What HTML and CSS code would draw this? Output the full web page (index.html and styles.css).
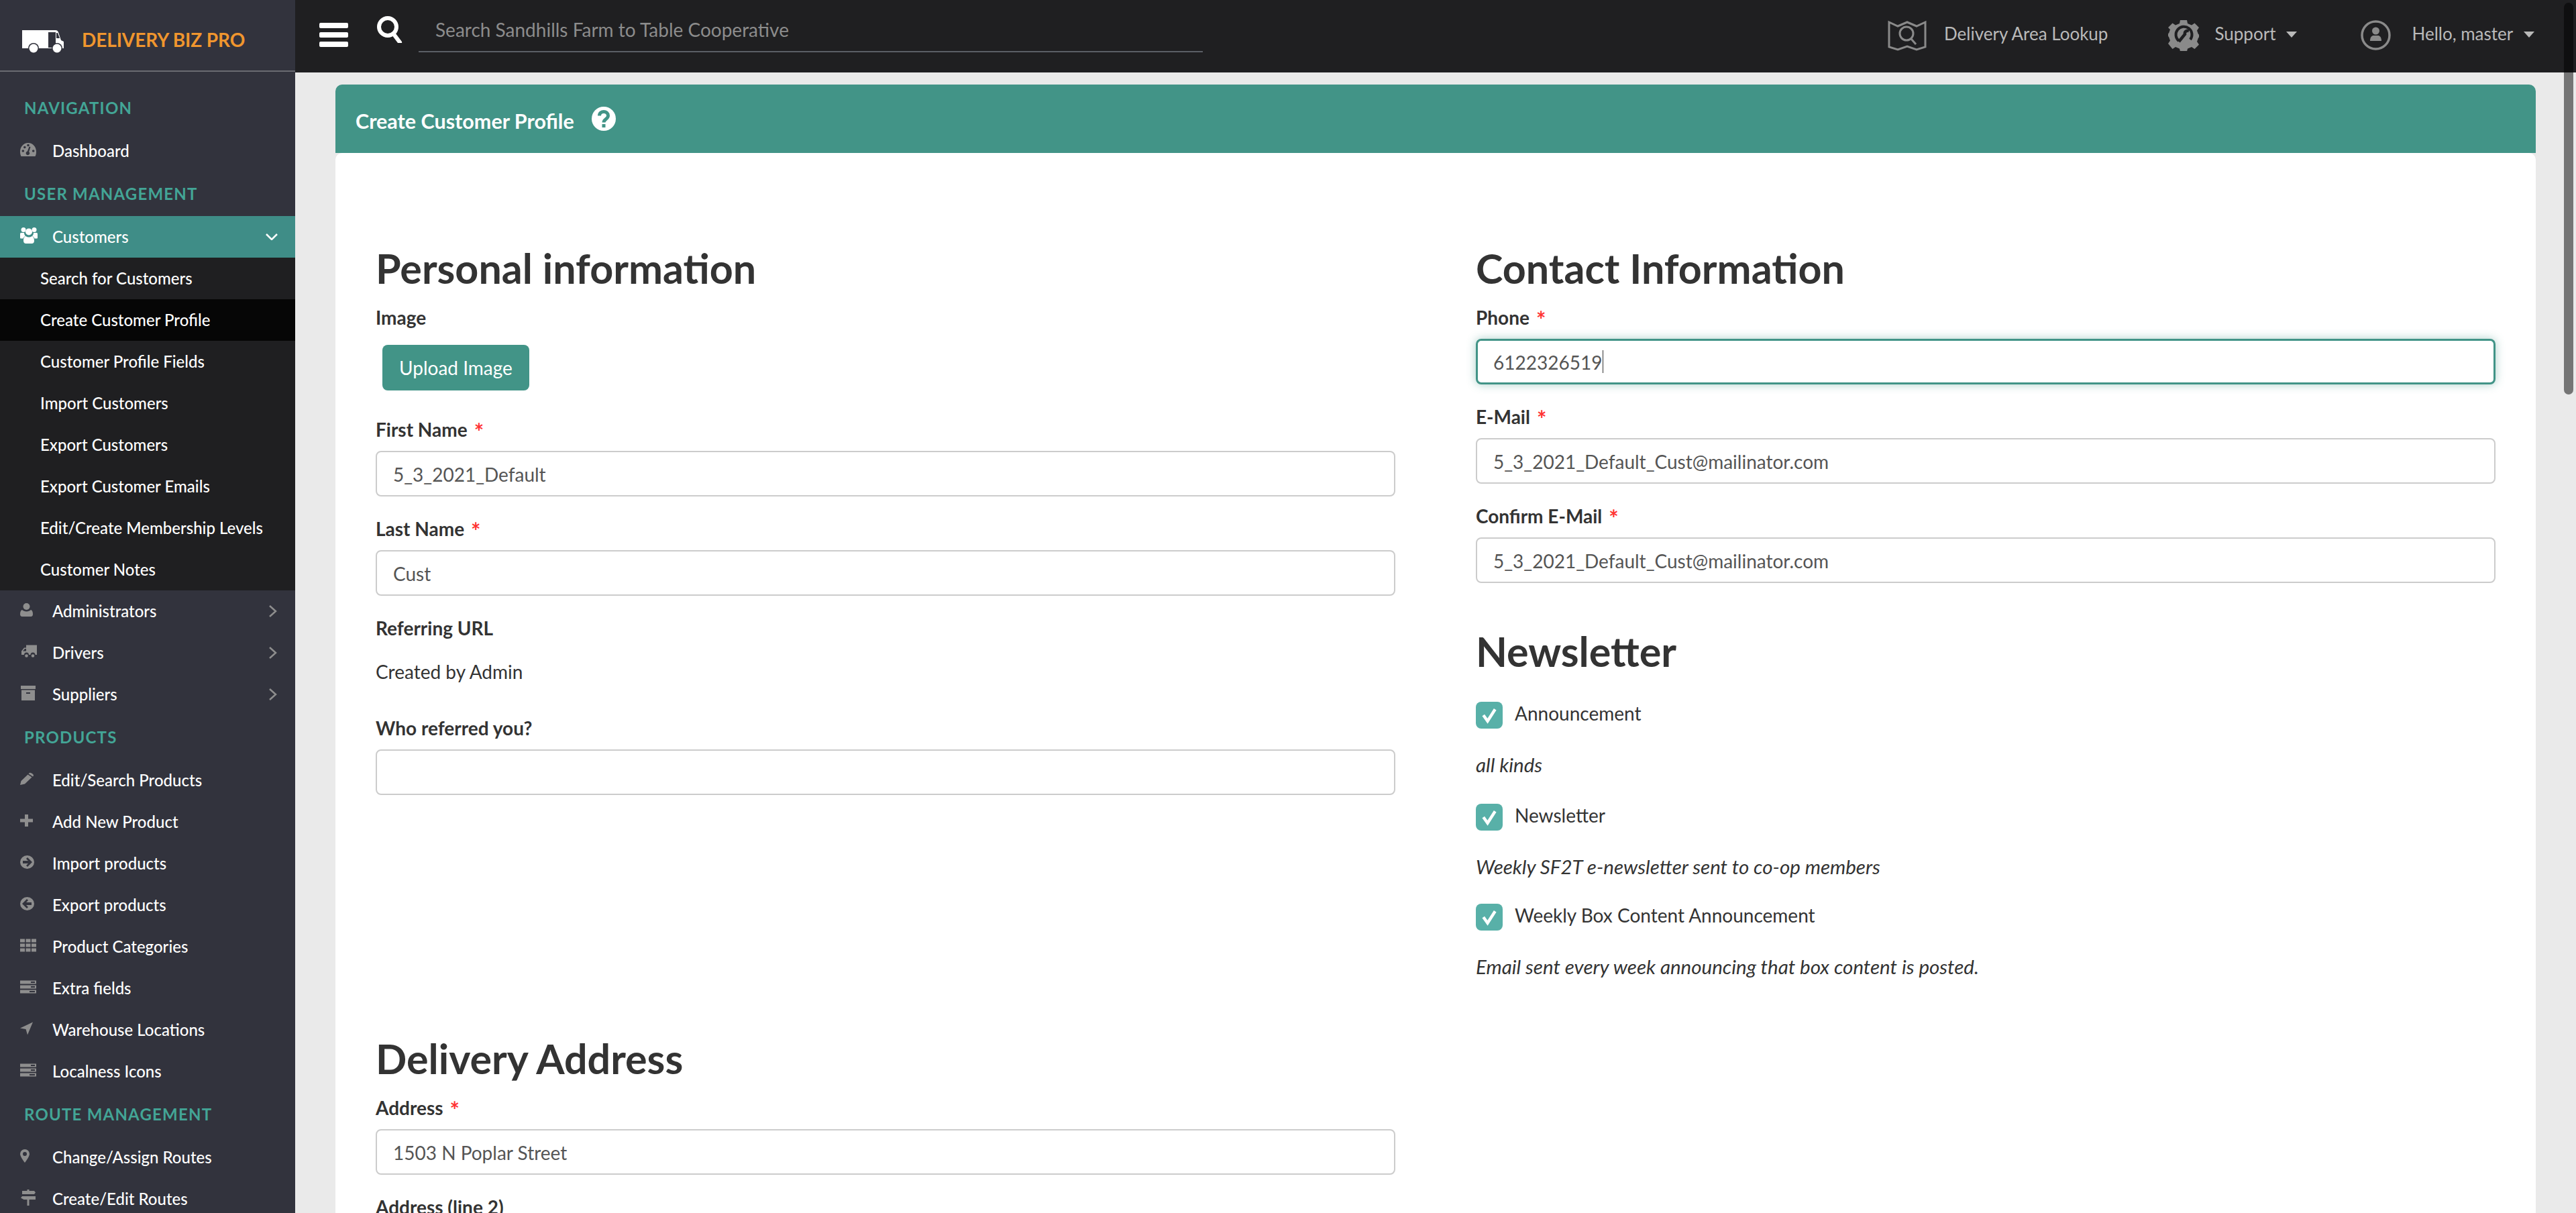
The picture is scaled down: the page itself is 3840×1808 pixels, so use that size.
FILE: index.html
```html
<!doctype html>
<html lang="en">
<head>
    <meta charset="UTF-8">
    <meta name="viewport" content="width=device-width, initial-scale=1.0">
    <title>Create Customer Profile</title>
    <link rel="stylesheet" href="styles.css">
</head>
<body>
<svg class="sprite" width="0" height="0">
    <symbol id="i-gauge" viewBox="0 -2 26 24"><path fill-rule="evenodd" d="M12 0C5 0 0 6 0 13c0 3 .5 5 1.500 7h21c1-2 1.500-4 1.500-7C24 6 19 0 12 0zM2.500 12a1.800 1.800 0 1 1 3.600 0 1.800 1.800 0 1 1-3.600 0zM5 6.500a1.800 1.800 0 1 1 3.600 0 1.800 1.800 0 1 1-3.600 0zM10.200 3.500a1.800 1.800 0 1 1 3.600 0 1.800 1.800 0 1 1-3.600 0zM17.900 12a1.800 1.800 0 1 1 3.600 0 1.800 1.800 0 1 1-3.600 0zM15.500 6l-2.300 7.200a2.800 2.800 0 1 1-2.300-.6L13.500 5.500z"/></symbol>
    <symbol id="i-users" viewBox="0 0 26 24"><circle cx="5" cy="3.500" r="3.500"/><circle cx="21" cy="3.500" r="3.500"/><circle cx="13" cy="6.500" r="5"/><path d="M1 8h5c0 2 1 4 2 5-2 .5-3 2-3.500 3.500H1.500C.5 16.500 0 16 0 15v-5c0-1 .5-2 1-2zM25 8h-5c0 2-1 4-2 5 2 .5 3 2 3.500 3.500h3c1 0 1.500-.5 1.500-1.500v-5c0-1-.5-2-1-2zM8.500 13c1.300 1 3 1.500 4.500 1.500s3.200-.5 4.500-1.500c2 .5 3.500 2.500 3.500 7 0 2.500-1.500 4-3.500 4h-9C6.500 24 5 22.500 5 20c0-4.500 1.500-6.500 3.500-7z"/></symbol>
    <symbol id="i-user" viewBox="0 -2 26 24"><circle cx="9.500" cy="5" r="5"/><path d="M3 10c1.500 1.500 4 2.500 6.500 2.500S14.500 11.500 16 10c2 .5 3 3 3 6.500 0 2-1 3.500-3 3.500H3c-2 0-3-1.500-3-3.500C0 13 1 10.500 3 10z"/></symbol>
    <symbol id="i-truck" viewBox="-1 -2.500 26 24"><path fill-rule="evenodd" d="M8 0h16v14.500h-2.500a3.500 3.500 0 0 0-7 0H12a3.500 3.500 0 0 0-7 0H1V9l4-5h3zM3 9h5V5.500H6z"/><circle cx="8.500" cy="16" r="2.300"/><circle cx="18" cy="16" r="2.300"/></symbol>
    <symbol id="i-box" viewBox="-1 -1 26 24"><path fill-rule="evenodd" d="M0 0h22v5H0zM1 6.500h20V22H1zM8 10v2h6v-2z"/></symbol>
    <symbol id="i-pencil" viewBox="0 -3 26 24"><path d="M14 0c1-.5 2 0 3 .5s3 2 3 3-.5 1.500-1 2l-6.500-4.300zM11.500 2.500l6 4L7 16.500 0 18l1.500-6z"/></symbol>
    <symbol id="i-plus" viewBox="0 -3 26 24"><path d="M7 0h5v6.500h7v5h-7V18H7v-6.500H0v-5h7z"/></symbol>
    <symbol id="i-in" viewBox="0 -2 26 24"><path fill-rule="evenodd" d="M10.500 0a10.500 10 0 1 1 0 20 10.500 10 0 1 1 0-20zM11 3L9 5l3 3H4v4h8l-3 3 2 2 7-7z"/></symbol>
    <symbol id="i-out" viewBox="0 -2 26 24"><path fill-rule="evenodd" d="M10.500 0a10.500 10 0 1 1 0 20 10.500 10 0 1 1 0-20zM10 3l2 2-3 3h8v4H9l3 3-2 2-7-7z"/></symbol>
    <symbol id="i-grid" viewBox="0 -2.500 26 24"><path d="M0 0h7v5H0zM8.500 0h7v5h-7zM17 0h7v5h-7zM0 7h7v5H0zM8.500 7h7v5h-7zM17 7h7v5h-7zM0 14h7v5H0zM8.500 14h7v5h-7zM17 14h7v5h-7z"/></symbol>
    <symbol id="i-rows" viewBox="0 -2.500 26 24"><path fill-rule="evenodd" d="M0 0h24v5H0zM16 1.500V3.500h6V1.500zM0 7h24v5H0zM16 8.500v2h6v-2zM0 14h24v5H0zM14 15.500v2h8v-2z"/></symbol>
    <symbol id="i-arrow" viewBox="0 -2.500 26 24"><path d="M19 0L11 19l-2.500-8.500L0 9z"/></symbol>
    <symbol id="i-pin" viewBox="0 -2 26 24"><path fill-rule="evenodd" d="M7 0a7 7 0 0 1 7 7c0 3-4 9-7 13C4 16 0 10 0 7a7 7 0 0 1 7-7zM7 4a3 3 0 1 0 0 6 3 3 0 0 0 0-6z"/></symbol>
    <symbol id="i-signs" viewBox="-1 0 26 24"><path d="M9.500 0h3v2H20l2 2.500L20 7H2V2h7.500zM2 10h20v5H4.500L0 12.500zM9.500 15h3v9h-3z"/></symbol>
</svg>

<div class="shell">
    <aside class="sidebar">
        <div class="brand">
            <svg class="brand-truck" viewBox="0 0 64 36">
                <path fill="#fff" d="M1 1h50c2 0 3 1 4 3l4 12 4 2v10H1z"/>
                <path fill="#32333d" d="M40 4h11v23H40zM52 5h2l3 8h-5z"/>
                <circle cx="18" cy="28" r="8" fill="#32333d"/><circle cx="18" cy="28" r="6.500" fill="#fff"/>
                <circle cx="53" cy="28" r="8" fill="#32333d"/><circle cx="53" cy="28" r="6.500" fill="#fff"/>
            </svg>
            <span class="brand-name">DELIVERY BIZ PRO</span>
        </div>
        <nav class="nav">
            <div class="nav-title">NAVIGATION</div>
            <a class="nav-item"><svg class="nav-icon"><use href="#i-gauge"/></svg>Dashboard</a>

            <div class="nav-title">USER MANAGEMENT</div>
            <a class="nav-item open"><svg class="nav-icon"><use href="#i-users"/></svg>Customers
                <svg class="chev-down" viewBox="0 0 18 10"><path d="M1 1l8 8 8-8"/></svg></a>
            <div class="sub-menu">
                <a class="sub-item">Search for Customers</a>
                <a class="sub-item active">Create Customer Profile</a>
                <a class="sub-item">Customer Profile Fields</a>
                <a class="sub-item">Import Customers</a>
                <a class="sub-item">Export Customers</a>
                <a class="sub-item">Export Customer Emails</a>
                <a class="sub-item">Edit/Create Membership Levels</a>
                <a class="sub-item">Customer Notes</a>
            </div>
            <a class="nav-item"><svg class="nav-icon"><use href="#i-user"/></svg>Administrators
                <svg class="chev-right" viewBox="0 0 12 18"><path d="M1 1l9 8-9 8"/></svg></a>
            <a class="nav-item"><svg class="nav-icon"><use href="#i-truck"/></svg>Drivers
                <svg class="chev-right" viewBox="0 0 12 18"><path d="M1 1l9 8-9 8"/></svg></a>
            <a class="nav-item"><svg class="nav-icon"><use href="#i-box"/></svg>Suppliers
                <svg class="chev-right" viewBox="0 0 12 18"><path d="M1 1l9 8-9 8"/></svg></a>

            <div class="nav-title">PRODUCTS</div>
            <a class="nav-item"><svg class="nav-icon"><use href="#i-pencil"/></svg>Edit/Search Products</a>
            <a class="nav-item"><svg class="nav-icon"><use href="#i-plus"/></svg>Add New Product</a>
            <a class="nav-item"><svg class="nav-icon"><use href="#i-in"/></svg>Import products</a>
            <a class="nav-item"><svg class="nav-icon"><use href="#i-out"/></svg>Export products</a>
            <a class="nav-item"><svg class="nav-icon"><use href="#i-grid"/></svg>Product Categories</a>
            <a class="nav-item"><svg class="nav-icon"><use href="#i-rows"/></svg>Extra fields</a>
            <a class="nav-item"><svg class="nav-icon"><use href="#i-arrow"/></svg>Warehouse Locations</a>
            <a class="nav-item"><svg class="nav-icon"><use href="#i-rows"/></svg>Localness Icons</a>

            <div class="nav-title">ROUTE MANAGEMENT</div>
            <a class="nav-item"><svg class="nav-icon"><use href="#i-pin"/></svg>Change/Assign Routes</a>
            <a class="nav-item"><svg class="nav-icon"><use href="#i-signs"/></svg>Create/Edit Routes</a>
        </nav>
    </aside>

    <div class="main">
        <header class="topbar">
            <button class="burger"><span></span><span></span><span></span></button>
            <svg class="search-icon" viewBox="0 0 38 40"><circle cx="16" cy="16" r="13" fill="none" stroke="#fff" stroke-width="6"/><path d="M25 27l9 12" stroke="#fff" stroke-width="6" stroke-linecap="round"/></svg>
            <div class="search-box">Search Sandhills Farm to Table Cooperative</div>
            <div class="top-links">
                <a class="top-link lookup">
                    <svg class="top-icon map" viewBox="0 0 58 46"><path fill="none" stroke="#8a8a8a" stroke-width="3" d="M2 3l13 6L29 3l14 6 13-6v37l-13 4-14-5-14 5-13-4z"/><circle cx="28" cy="20" r="10" fill="none" stroke="#8a8a8a" stroke-width="3"/><path d="M35 28l7 8" stroke="#8a8a8a" stroke-width="3"/></svg>
                    Delivery Area Lookup
                </a>
                <a class="top-link support">
                    <svg class="top-icon gear" viewBox="0 0 46 46"><path fill="#8a8a8a" d="M18 0h10l1 5 6 2.500 4.500-3L46 11l-3 4.500 2 5.500 1 .5v4l-1 1-2 5.500 3 4.500-6.500 6.500-4.500-3-6 2.500-1 4H18l-1-4-6-2.500-4.500 3L0 35l3-4.500L1 25l-1-1v-4l1-.5 2-5.500L0 11l6.500-6.500 4.500 3 6-2.500z"/><path fill="none" stroke="#1f1f21" stroke-width="4" d="M16 31a12 12 0 1 1 17-2"/><path fill="none" stroke="#1f1f21" stroke-width="4.500" d="M16 32l9-11c-1-4 3-6 6-5"/></svg>
                    Support<span class="caret"></span>
                </a>
                <a class="top-link account">
                    <svg class="top-icon person" viewBox="0 0 45 45"><circle cx="22.500" cy="22.500" r="20.500" fill="none" stroke="#8a8a8a" stroke-width="3.500"/><circle cx="22.500" cy="16" r="5.500" fill="#8a8a8a"/><path fill="#8a8a8a" d="M14 31c0-6 3-8 5-8h7c2 0 5 2 5 8z"/></svg>
                    Hello, master<span class="caret"></span>
                </a>
            </div>
        </header>

        <div class="content">
            <div class="card-head">
                <span class="card-title">Create Customer Profile</span>
                <svg class="help" viewBox="0 0 36 36"><circle cx="18" cy="18" r="18" fill="#fff"/><path fill="none" stroke="#429487" stroke-width="5" d="M11.500 13.500c0-8 13-8 13 0 0 5-6.500 5-6.500 10"/><rect x="15.500" y="26" width="5" height="5" fill="#429487"/></svg>
            </div>
            <div class="card-body">
                <section class="col">
                    <h2>Personal information</h2>
                    <label class="label">Image</label>
                    <button class="btn-upload">Upload Image</button>
                    <div class="field">
                        <label class="label">First Name<i class="req">*</i></label>
                        <input class="input" type="text" value="5_3_2021_Default">
                    </div>
                    <div class="field">
                        <label class="label">Last Name<i class="req">*</i></label>
                        <input class="input" type="text" value="Cust">
                    </div>
                    <div class="field static">
                        <label class="label">Referring URL</label>
                        <p class="plain">Created by Admin</p>
                    </div>
                    <div class="field">
                        <label class="label">Who referred you?</label>
                        <input class="input" type="text">
                    </div>
                </section>

                <section class="col">
                    <h2>Contact Information</h2>
                    <div class="field">
                        <label class="label">Phone<i class="req">*</i></label>
                        <div class="input-wrap">
                            <input class="input focused" type="text" value="6122326519">
                            <span class="text-caret"></span>
                        </div>
                    </div>
                    <div class="field">
                        <label class="label">E-Mail<i class="req">*</i></label>
                        <input class="input" type="text" value="5_3_2021_Default_Cust@mailinator.com">
                    </div>
                    <div class="field">
                        <label class="label">Confirm E-Mail<i class="req">*</i></label>
                        <input class="input" type="text" value="5_3_2021_Default_Cust@mailinator.com">
                    </div>

                    <h2 class="news-head">Newsletter</h2>
                    <div class="check-row">
                        <span class="check"><svg viewBox="0 0 24 24"><path d="M5 12l5 7 9-14"/></svg></span>Announcement
                    </div>
                    <p class="note">all kinds</p>
                    <div class="check-row">
                        <span class="check"><svg viewBox="0 0 24 24"><path d="M5 12l5 7 9-14"/></svg></span>Newsletter
                    </div>
                    <p class="note">Weekly SF2T e-newsletter sent to co-op members</p>
                    <div class="check-row">
                        <span class="check"><svg viewBox="0 0 24 24"><path d="M5 12l5 7 9-14"/></svg></span>Weekly Box Content Announcement
                    </div>
                    <p class="note">Email sent every week announcing that box content is posted.</p>
                </section>

                <section class="col">
                    <h2>Delivery Address</h2>
                    <div class="field">
                        <label class="label">Address<i class="req">*</i></label>
                        <input class="input" type="text" value="1503 N Poplar Street">
                    </div>
                    <div class="field">
                        <label class="label">Address (line 2)</label>
                        <input class="input" type="text">
                    </div>
                </section>
            </div>
        </div>
    </div>
</div>
<div class="scroll-thumb"></div>
</body>
</html>
```

FILE: styles.css
```css
* {
    box-sizing: border-box;
}
html, body {
    margin: 0;
    height: 100%;
    overflow: hidden;
}
body {
    font-family: Lato, "Liberation Sans", sans-serif;
    font-size: 28px;
    line-height: 34px;
    color: #333;
    background: #eaeaea;
}
.sprite {
    display: none;
}
.shell {
    display: grid;
    grid-template-columns: 440px 1fr;
    height: 1808px;
    overflow: hidden;
}

/* sidebar */
.sidebar {
    background: #32333d;
    overflow: hidden;
}
.brand {
    height: 107px;
    display: flex;
    align-items: center;
    padding: 19px 0 0 32px;
    border-bottom: 2px solid #6a6b72;
}
.brand-truck {
    width: 64px;
    height: 36px;
}
.brand-name {
    margin-left: 26px;
    color: #f0962e;
    font-size: 28px;
    font-weight: 700;
    letter-spacing: -0.1px;
    position: relative;
    top: -3px;
}
.nav {
    padding-top: 21px;
}
.nav-title {
    height: 66px;
    line-height: 66px;
    padding-left: 36px;
    color: #43a596;
    font-size: 24px;
    font-weight: 700;
    letter-spacing: 1.2px;
}
.nav-item {
    height: 62px;
    display: flex;
    align-items: center;
    padding-left: 30px;
    color: #fff;
    font-size: 24px;
    font-weight: 500;
    position: relative;
}
.nav-item.open {
    background: #3f8d87;
}
.nav-icon {
    width: 26px;
    height: 24px;
    margin-right: 22px;
    fill: #8e8e8e;
    position: relative;
    top: -2px;
}
.open .nav-icon {
    fill: #fff;
}
.chev-down, .chev-right {
    position: absolute;
    fill: none;
    stroke-width: 2.500;
}
.chev-down {
    right: 26px;
    top: 26px;
    width: 18px;
    height: 10px;
    stroke: #fff;
}
.chev-right {
    right: 27px;
    top: 22px;
    width: 12px;
    height: 18px;
    stroke: #8e8e8e;
}
.sub-menu {
    background: #1f1f21;
}
.sub-item {
    display: flex;
    align-items: center;
    height: 62px;
    padding-left: 60px;
    color: #fff;
    font-size: 24px;
    font-weight: 500;
}
.sub-item.active {
    background: #060606;
}

/* top bar */
.main {
    min-width: 0;
}
.topbar {
    height: 108px;
    background: #1f1f21;
    display: flex;
    padding-left: 36px;
    color: #b9b9b9;
}
.burger {
    width: 43px;
    height: 36px;
    margin-top: 34px;
    padding: 0;
    border: none;
    background: none;
    display: flex;
    flex-direction: column;
    justify-content: space-between;
}
.burger span {
    display: block;
    height: 8px;
    background: #fff;
    border-radius: 2px;
}
.search-icon {
    width: 38px;
    height: 40px;
    margin: 24px 0 0 43px;
}
.search-box {
    width: 1169px;
    height: 78px;
    margin-left: 24px;
    padding: 27px 0 0 25px;
    border-bottom: 2px solid #5b5f66;
    color: #8c8c8c;
    font-size: 28px;
}
.top-links {
    display: flex;
    margin-left: 1021px;
}
.top-link {
    display: flex;
    align-items: flex-start;
    height: 100%;
    padding-top: 33px;
    font-size: 26px;
}
.top-icon {
    margin-top: -3px;
}
.map {
    width: 58px;
    height: 46px;
    margin-right: 26px;
}
.gear {
    width: 46px;
    height: 46px;
    margin-right: 23px;
}
.person {
    width: 45px;
    height: 45px;
    margin-right: 31px;
}
.support {
    margin-left: 90px;
}
.account {
    margin-left: 95px;
}
.caret {
    width: 0;
    height: 0;
    margin: 14px 0 0 16px;
    border-left: 8px solid transparent;
    border-right: 8px solid transparent;
    border-top: 9px solid #b9b9b9;
}

/* card */
.content {
    padding: 18px 60px 0;
}
.card-head {
    height: 102px;
    display: flex;
    align-items: center;
    padding-left: 30px;
    background: #429487;
    border-radius: 10px 10px 0 0;
}
.card-title {
    color: #fff;
    font-size: 30.500px;
    font-weight: 700;
    position: relative;
    top: 3px;
}
.help {
    width: 36px;
    height: 36px;
    margin-left: 26px;
}
.card-body {
    display: grid;
    grid-template-columns: 1fr 1fr;
    column-gap: 120px;
    row-gap: 87px;
    padding: 139px 60px 0;
    background: #fff;
    border-radius: 10px 10px 0 0;
}
h2 {
    margin: 0 0 25px;
    font-size: 61px;
    line-height: 66px;
    font-weight: 700;
    color: #333;
}
.label {
    display: block;
    font-weight: 700;
    font-size: 28px;
    line-height: 30px;
}
.req {
    color: #f33;
    font-size: 34px;
    line-height: 0;
    font-style: normal;
    font-weight: 700;
    margin-left: 10px;
    position: relative;
    top: 5px;
}
.btn-upload {
    display: block;
    width: 219px;
    height: 68px;
    margin: 26px 0 43px 10px;
    border: none;
    border-radius: 8px;
    background: #429487;
    color: #fff;
    font-family: inherit;
    font-size: 28px;
}
.field {
    margin-bottom: 33px;
}
.field .label {
    margin-bottom: 17px;
}
.input {
    display: block;
    width: 100%;
    height: 68px;
    padding: 2px 24px 0;
    border: 2px solid #ccc;
    border-radius: 8px;
    font-family: inherit;
    font-size: 28px;
    color: #555;
    background: #fff;
    outline: none;
}
.input-wrap {
    position: relative;
}
.input.focused {
    border: 3px solid #429487;
    padding: 2px 23px 0;
    box-shadow: 0 0 14px rgba(66, 148, 135, 0.45);
}
.text-caret {
    position: absolute;
    left: 189px;
    top: 17px;
    width: 1px;
    height: 34px;
    background: #333;
}
.plain {
    margin: 33px 0 52px;
}
.field.static {
    margin-bottom: 0;
}
.news-head {
    margin: 69px 0 0;
}
.check-row {
    display: flex;
    align-items: flex-start;
    margin-top: 42px;
    height: 40px;
    font-size: 28px;
}
.check {
    width: 40px;
    height: 40px;
    margin-right: 18px;
    border-radius: 8px;
    background: #58b0a8;
    display: flex;
    align-items: center;
    justify-content: center;
    position: relative;
}
.check svg {
    width: 30px;
    height: 30px;
    fill: none;
    stroke: #fff;
    stroke-width: 3.500;
}
.note {
    margin: 37px 0 0;
    font-size: 29.500px;
    font-style: italic;
}
.check-row + .note + .check-row {
    margin-top: 41px;
}
.note + .check-row + .note + .check-row {
    margin-top: 38px;
}

/* page scrollbar */
.scroll-thumb {
    position: absolute;
    left: 3822px;
    top: 4px;
    width: 14px;
    height: 584px;
    border-radius: 7px;
    background: linear-gradient(#0f0f10 104px, #757575 104px);
}
```
